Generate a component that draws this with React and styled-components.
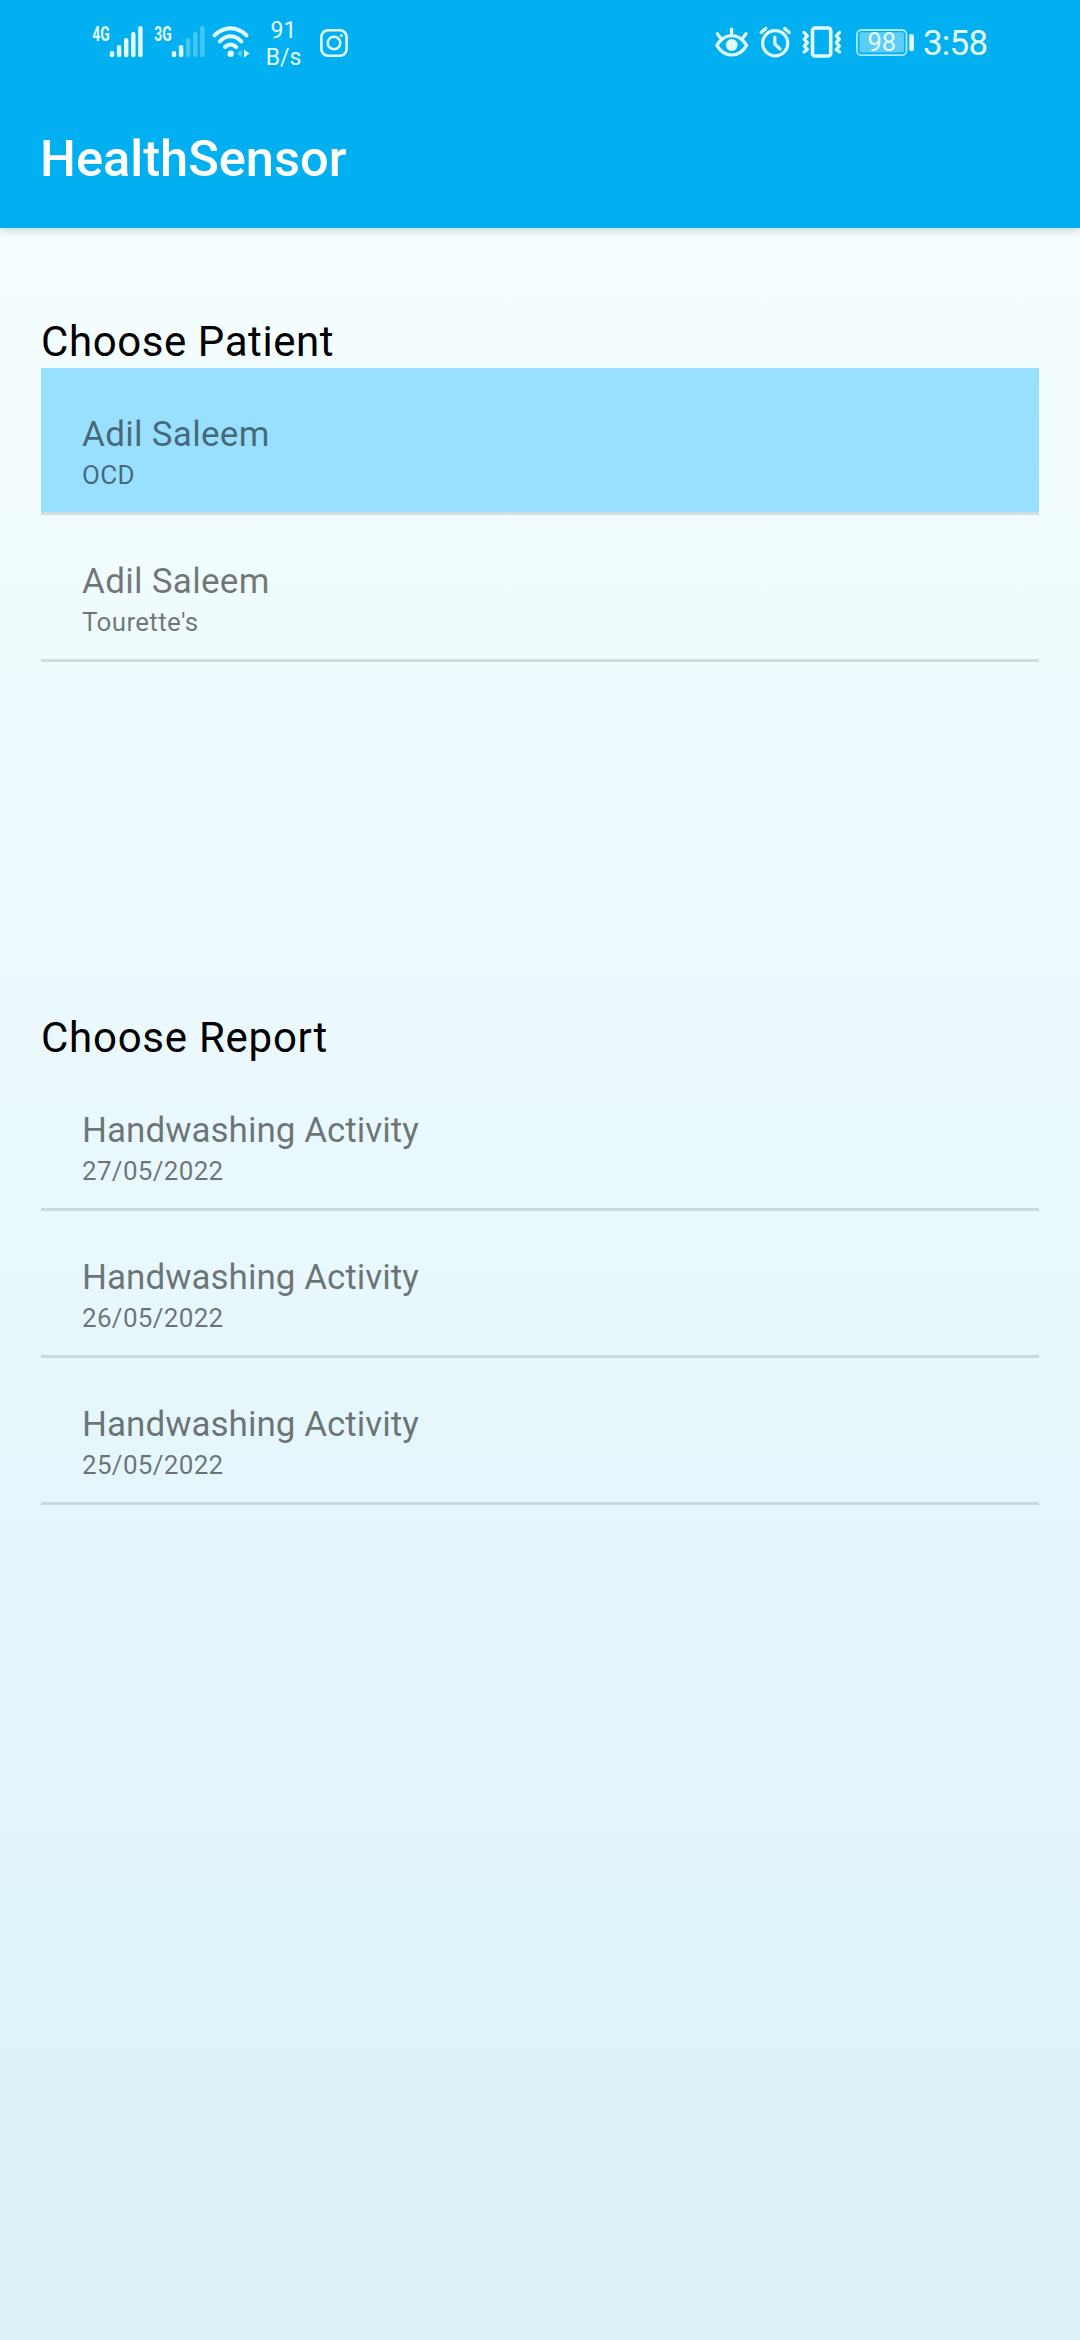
import React from "react";
import styled, { createGlobalStyle } from "styled-components";

const GlobalStyle = createGlobalStyle`
  *, *::before, *::after { box-sizing: border-box; }
  body { margin: 0; font-family: Roboto, "Noto Sans", sans-serif; }
`;

const Screen = styled.div`
  display: flex;
  flex-direction: column;
  min-height: 2340px;
  background: linear-gradient(180deg, #f8ffff 0%, #e9f8fd 50%, #daf2f8 100%);
`;

const Header = styled.header`
  background: #02b0f2;
  height: 228px;
  box-shadow: 0 2px 10px rgba(0, 0, 0, 0.18);
`;

const StatusBar = styled.div`
  display: flex;
  justify-content: space-between;
  height: 88px;
  padding: 0 92px;
  color: #e2fbff;
`;

const StatusGroup = styled.div`
  display: flex;
  align-items: flex-start;
`;

const Glyph = styled.svg`
  display: block;
  flex: none;
  overflow: visible;
  margin: 20px ${(p) => p.$after || 0}px 0 0;
`;

const NetSpeed = styled.div`
  width: 38px;
  margin: 17px 17.5px 0 0;
  font-size: 23px;
  line-height: 27px;
  text-align: center;
`;

const Clock = styled.time`
  font-size: 35px;
  line-height: 43px;
  letter-spacing: -0.8px;
  margin-top: 22px;
  width: 65px;
  white-space: nowrap;
`;

const Toolbar = styled.div`
  height: 140px;
  padding: 40px 40px 0;
`;

const AppTitle = styled.h1`
  margin: 0;
  color: #fff;
  font-size: 50.6px;
  font-weight: 500;
  line-height: 61px;
`;

const Content = styled.main`
  display: flex;
  flex-direction: column;
  padding: 87px 41px 0;
`;

const Section = styled.section`
  height: 696px;
`;

const SectionTitle = styled.h2`
  margin: 0;
  color: #000;
  font-size: 42px;
  font-weight: 400;
  line-height: 53px;
  letter-spacing: ${(p) => p.$tracking}px;
`;

const List = styled.ul`
  list-style: none;
  margin: 0;
  padding: 0;
`;

const Item = styled.li`
  height: 147px;
  padding: 43px 41px 0;
  background: ${(p) => (p.$selected ? "#99dfff" : "transparent")};
  background-clip: padding-box;
  border-bottom: 3px solid rgba(0, 0, 0, 0.12);
  color: rgba(0, 0, 0, 0.54);
`;

const ItemTitle = styled.div`
  font-size: 35px;
  line-height: 47px;
  letter-spacing: ${(p) => p.$tracking}px;
`;

const ItemDetail = styled.div`
  font-size: 26px;
  line-height: 34px;
  letter-spacing: 0.32px;
`;

const patients = [
  { title: "Adil Saleem", detail: "OCD", selected: true },
  { title: "Adil Saleem", detail: "Tourette's" },
];

const reports = [
  { title: "Handwashing Activity", detail: "27/05/2022" },
  { title: "Handwashing Activity", detail: "26/05/2022" },
  { title: "Handwashing Activity", detail: "25/05/2022" },
];

const barTops = [31, 25, 18, 12, 6];

function Signal({ label, level, after }) {
  return (
    <Glyph width="50" height="40" viewBox="0 0 50 40" fill="currentColor" $after={after}>
      <text x="0.3" y="20.5" fontSize="19.5" fontWeight="700" textLength="17.5" lengthAdjust="spacingAndGlyphs">{label}</text>
      {barTops.map((top, i) => (
        <rect key={top} x={17.8 + i * 7.1} y={top} width="4.4" height={37.3 - top} rx="2.1" opacity={i < level ? 1 : 0.3} />
      ))}
    </Glyph>
  );
}

function Wifi() {
  return (
    <Glyph width="38" height="40" viewBox="0 0 38 40" fill="none" stroke="currentColor" strokeWidth="4" strokeLinecap="round" $after={14.5}>
      <path d="M2.5 15.4C12 5.9 25 5.9 34.5 15.4" />
      <path d="M7.8 21.3C14.3 14.5 22.8 14.5 29.3 21.3" />
      <path d="M13 27C16.4 23.7 20.8 23.7 24.2 27" />
      <circle cx="18.7" cy="33.7" r="3.2" fill="currentColor" stroke="none" />
      <path d="M30 29.5v8l-5.5-4z" fill="currentColor" stroke="none" opacity="0.35" />
      <path d="M32 29.5v8l5.5-4z" fill="currentColor" stroke="none" />
    </Glyph>
  );
}

function Camera() {
  return (
    <Glyph width="28" height="40" viewBox="0 0 28 40" fill="none" stroke="currentColor" strokeWidth="2.6">
      <rect x="1.4" y="10.3" width="25.2" height="25.4" rx="6.6" />
      <circle cx="14" cy="23" r="6.3" />
      <circle cx="21.4" cy="15.5" r="1.6" fill="currentColor" stroke="none" />
    </Glyph>
  );
}

function Eye() {
  return (
    <Glyph width="34" height="40" viewBox="0 0 34 40" fill="none" stroke="currentColor" strokeWidth="3.2" strokeLinecap="round" $after={11}>
      <path d="M1.8 25.4C9.5 12.3 24 12.3 31.7 25.4C24 38.2 9.5 38.2 1.8 25.4Z" strokeLinejoin="round" />
      <circle cx="16.7" cy="25" r="5.9" fill="currentColor" stroke="none" />
      <path d="M16.6 9v6M2.3 13.7l3 4M31 13.7l-3 4" />
    </Glyph>
  );
}

function Alarm() {
  return (
    <Glyph width="32" height="40" viewBox="0 0 32 40" fill="none" stroke="currentColor" strokeWidth="3.2" strokeLinecap="round" $after={10}>
      <circle cx="15.2" cy="23.3" r="12.6" />
      <path d="M14.8 17v7l5.2 5" strokeLinejoin="round" />
      <path d="M1.3 12.5l4.5-4M29.2 12.5l-4.5-4" />
    </Glyph>
  );
}

function Vibrate() {
  return (
    <Glyph width="40" height="40" viewBox="0 0 40 40" fill="none" stroke="currentColor" strokeWidth="3.2" strokeLinecap="round" strokeLinejoin="round" $after={14}>
      <rect x="10.5" y="8" width="18.2" height="28" rx="2.5" strokeWidth="3.6" />
      <path d="M2 12.4l3.4 3.4-3.2 3.4 3.2 3.5-3.2 3.5 3.2 3.2-3.4 2.6M37.6 12.4l-3.4 3.4 3.2 3.4-3.2 3.5 3.2 3.5-3.2 3.2 3.4 2.6" />
    </Glyph>
  );
}

function Battery() {
  return (
    <Glyph width="59" height="40" viewBox="0 0 59 40" fill="currentColor" $after={8}>
      <rect x="0.9" y="10" width="49.6" height="25.2" rx="4.5" fill="none" stroke="currentColor" strokeWidth="1.8" opacity="0.75" />
      <rect x="3.5" y="12.3" width="44.5" height="20.2" rx="2" opacity="0.4" />
      <rect x="53.3" y="14" width="4.6" height="17.3" rx="2" />
      <text x="25.8" y="31" fontSize="25.5" textAnchor="middle">98</text>
    </Glyph>
  );
}

function ItemList({ items, tracking }) {
  return (
    <List>
      {items.map((item) => (
        <Item key={item.detail} $selected={item.selected}>
          <ItemTitle $tracking={tracking}>{item.title}</ItemTitle>
          <ItemDetail>{item.detail}</ItemDetail>
        </Item>
      ))}
    </List>
  );
}

export default function App() {
  return (
    <Screen>
      <GlobalStyle />
      <Header>
        <StatusBar>
          <StatusGroup>
            <Signal label="4G" level={5} after={11.5} />
            <Signal label="3G" level={2} after={8.5} />
            <Wifi />
            <NetSpeed>91 B/s</NetSpeed>
            <Camera />
          </StatusGroup>
          <StatusGroup>
            <Eye />
            <Alarm />
            <Vibrate />
            <Battery />
            <Clock>3:58</Clock>
          </StatusGroup>
        </StatusBar>
        <Toolbar>
          <AppTitle>HealthSensor</AppTitle>
        </Toolbar>
      </Header>
      <Content>
        <Section>
          <SectionTitle $tracking={0.58}>Choose Patient</SectionTitle>
          <ItemList items={patients} tracking={0.3} />
        </Section>
        <Section>
          <SectionTitle $tracking={0.74}>Choose Report</SectionTitle>
          <ItemList items={reports} tracking={0.02} />
        </Section>
      </Content>
    </Screen>
  );
}
